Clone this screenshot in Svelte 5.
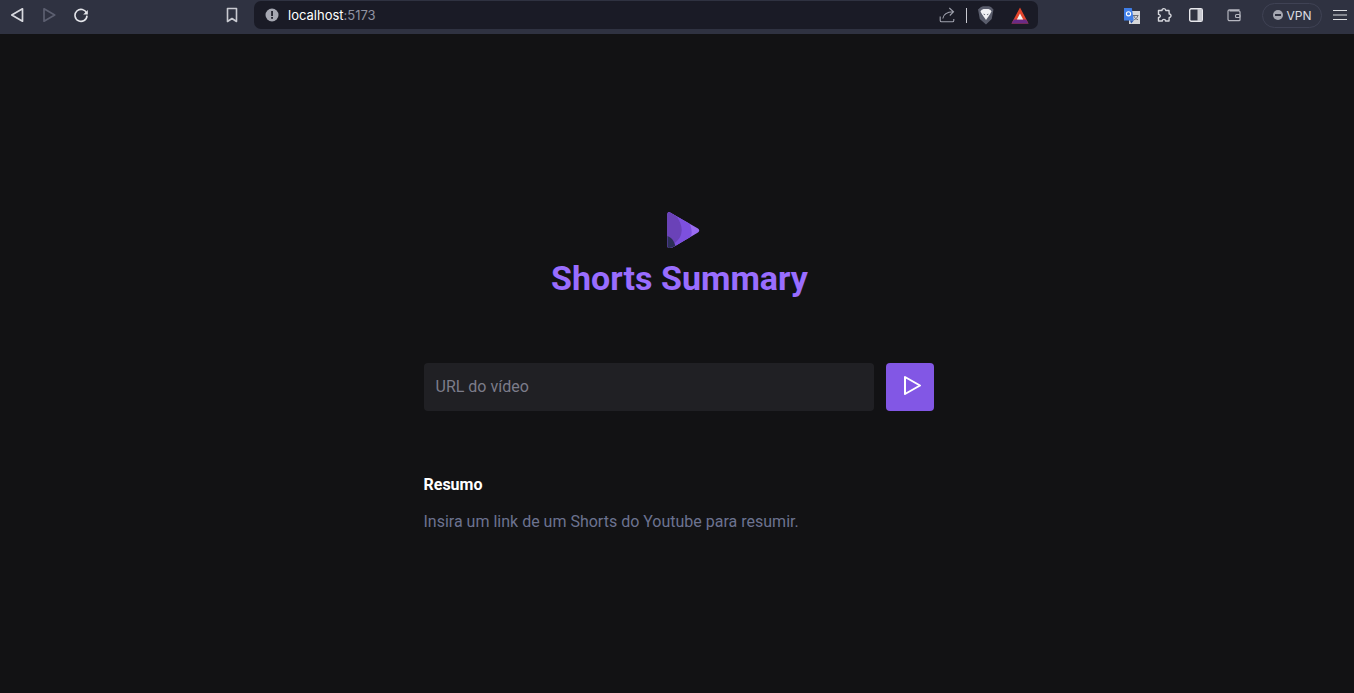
<script>
  let url = $state('');
</script>

<div class="page">
  <header class="toolbar">
    <nav class="nav">
      <button class="tb" aria-label="Voltar"><svg width="16" height="16" viewBox="0 0 16 16"><path d="M13.500 1.800 2.800 8 13.500 14.200Z" fill="none" stroke="#d8d9df" stroke-width="1.700" stroke-linejoin="round"/></svg></button>
      <button class="tb" aria-label="Avançar"><svg width="16" height="16" viewBox="0 0 16 16"><path d="M3 1.800 13.700 8 3 14.200Z" fill="none" stroke="#5c5f70" stroke-width="1.700" stroke-linejoin="round"/></svg></button>
      <button class="tb" aria-label="Recarregar"><svg width="16" height="16" viewBox="0 0 16 16"><path d="M13.600 6.200A6 6 0 1 0 14 8.600" fill="none" stroke="#e4e5ea" stroke-width="1.600"/><path d="M14.800 3v4.600h-4.600Z" fill="#e4e5ea"/></svg></button>
    </nav>
    <button class="tb bookmark" aria-label="Favorito"><svg width="14" height="16" viewBox="0 0 14 16"><path d="M2.500 1.500h9v13L7 11.500l-4.500 3Z" fill="none" stroke="#c9cad1" stroke-width="1.600" stroke-linejoin="round"/></svg></button>
    <div class="address">
      <svg class="info" width="14" height="14" viewBox="0 0 14 14"><circle cx="7" cy="7" r="6.500" fill="#a6a8b2"/><rect x="6.200" y="3" width="1.700" height="5" fill="#1a1b26"/><rect x="6.200" y="9" width="1.700" height="1.800" fill="#1a1b26"/></svg>
      <span class="host">localhost<span class="port">:5173</span></span>
      <span class="spacer"></span>
      <svg class="share" width="16" height="16" viewBox="0 0 16 16"><path d="M1.200 9.500v4a1.300 1.300 0 0 0 1.300 1.300h11a1.300 1.300 0 0 0 1.300-1.300v-1.500" fill="none" stroke="#a0a2ae" stroke-width="1.100"/><path d="M3.800 11.500C4.500 7.500 7.500 5 14 4.800M10.300 1 14.500 4.800 10.800 8.500" fill="none" stroke="#a0a2ae" stroke-width="1.100"/></svg>
      <span class="divider"></span>
      <svg class="brave" width="18" height="19" viewBox="0 0 18 19"><path d="M4 1 6 .3h6l2 .7 2.500 2.500-.5 2.500-1.300 7L9 18.500 2.800 13l-1.300-7L1 3.500Z" fill="#5a5d6c"/><path d="M4.500 4 6.500 3h5l2 1 1 1.500-1.700 3-1 1.500L9 14 6.200 10l-1-1.500L3.500 5.500Z" fill="#f1f1f4"/><path d="M6.500 7.500 8.300 8.500 7 9.300ZM11.500 7.500 9.700 8.500 11 9.300Z" fill="#5a5d6c"/></svg>
      <svg class="bat" width="18" height="17" viewBox="0 0 18 17"><path d="M9 .5.500 16.500h17Z" fill="#e4452b"/><path d="M.5 16.500h17l-2.400-4H2.900Z" fill="#6a2a86"/><path d="M9 6.500 5.800 12.500h6.400Z" fill="#f4f4f4"/></svg>
    </div>
    <div class="ext">
      <svg class="translate" width="16" height="16" viewBox="0 0 16 16"><rect x="5" y="3" width="11" height="13" fill="#d6d7da"/><path d="M9 7.500h5.500M9.800 8c.7 1.800 2.300 3.200 4.200 3.700M13.700 8c-.5 1.700-1.800 3-3.500 3.700" fill="none" stroke="#6c6e76" stroke-width="1"/><path d="M0 0h7.800l2 12.500H0Z" fill="#3f7ee8"/><path d="M6 12.500h3.800L7.200 15.500Z" fill="#2a56b0"/><circle cx="4.500" cy="5.800" r="2.100" fill="none" stroke="#fff" stroke-width="1.100"/></svg>
      <svg class="puzzle" width="16" height="16" viewBox="0 0 16 16"><path d="M6 3.500C5.700 1.200 9.600.8 9.800 3.500H13l.2 3.500c2.300-.3 2.500 3.500 0 3.500l-.2 3.500H9.500c.2-2.200-3.400-2.200-3.200 0H2.500v-3.600c2.300.3 2.500-3.100 0-3V3.500Z" fill="none" stroke="#d6d7dd" stroke-width="1.400" stroke-linejoin="round"/></svg>
      <svg class="panel" width="14" height="14" viewBox="0 0 14 14"><rect x=".7" y=".7" width="12.600" height="12.600" rx="1.500" fill="none" stroke="#e8e8ec" stroke-width="1.400"/><rect x="8.500" y="1" width="4.500" height="12" fill="#c9cad1"/></svg>
      <svg class="wallet" width="14" height="14" viewBox="0 0 14 14"><path d="M12 3V1.800H2.500A1.500 1.500 0 0 0 1 3.300v7.900a1.500 1.500 0 0 0 1.500 1.500h9.500a1 1 0 0 0 1-1V4a1 1 0 0 0-1-1H2.500" fill="none" stroke="#b6b7c0" stroke-width="1.200"/><rect x="8.500" y="6.500" width="4.500" height="3" rx="1" fill="none" stroke="#b6b7c0" stroke-width="1.100"/></svg>
      <div class="vpn"><span class="dot"></span>VPN</div>
      <svg class="menu" width="14" height="12" viewBox="0 0 14 12"><path d="M0 1.500h14M0 6h14M0 10.500h14" stroke="#dcdde2" stroke-width="1.200"/></svg>
    </div>
  </header>

  <main class="main">
    <div class="container">
      <div class="brand">
        <svg class="logo" width="33" height="38" viewBox="0 0 33 38">
          <defs><clipPath id="tri"><path d="M.5 3Q.5.400 3 1.500L31 17.500Q33.500 19.500 31 21.500L9 34.500Q5 37 2 37Q.5 37 .5 35Z"/></clipPath></defs>
          <g clip-path="url(#tri)">
            <rect width="33" height="38" fill="#9a6cf2"/>
            <path d="M0 0H10C20 6 25 14 24.700 22 24 28 20 30 14 36L0 38Z" fill="#7d50de"/>
            <path d="M0 0H4C10 4 14.500 12 14.700 19 14.500 25 12 28 9 31L0 38Z" fill="#6a42b8"/>
            <path d="M0 25C4 26 8 30 9 38H0Z" fill="#2b2f56"/>
          </g>
        </svg>
        <h1>Shorts Summary</h1>
      </div>

      <form class="search" onsubmit={(e) => e.preventDefault()}>
        <input type="url" placeholder="URL do vídeo" bind:value={url} />
        <button class="submit" type="submit" aria-label="Resumir">
          <svg width="24" height="24" viewBox="0 0 24 24"><path d="M5 3 20 11.500 5 20Z" fill="none" stroke="#fff" stroke-width="2" stroke-linejoin="round"/></svg>
        </button>
      </form>

      <section class="summary">
        <h2>Resumo</h2>
        <p>Insira um link de um Shorts do Youtube para resumir.</p>
      </section>
    </div>
  </main>
</div>

<style>
  :global(body) {
    margin: 0;
    background: #121214;
  }
  .page {
    height: 693px;
    display: flex;
    flex-direction: column;
    font-family: Roboto, "Liberation Sans", sans-serif;
    overflow: hidden;
  }
  .toolbar {
    height: 34px;
    flex: none;
    background: #2f3241;
    display: flex;
    align-items: flex-start;
    box-sizing: border-box;
  }
  .nav {
    display: flex;
    margin-left: 1px;
    width: 215px;
    flex: none;
  }
  .tb {
    background: none;
    border: none;
    padding: 0;
    width: 32px;
    height: 30px;
    display: flex;
    align-items: center;
    justify-content: center;
  }
  .bookmark {
    margin-right: 6px;
    flex: none;
  }
  .address {
    width: 784px;
    height: 28px;
    margin-top: 1px;
    flex: none;
    background: #1a1b26;
    border-radius: 7px;
    display: flex;
    align-items: center;
    box-sizing: border-box;
    padding-left: 11px;
    padding-right: 9px;
  }
  .info { flex: none; margin-right: 9px; }
  .host {
    color: #fff;
    font-size: 13px;
    font-family: Inter, Roboto, sans-serif;
  }
  .port { color: #9092a0; }
  .spacer { flex: 1; }
  .share { margin-right: 11px; }
  .divider {
    width: 1px;
    height: 15px;
    background: #c9cad1;
    margin-right: 10px;
  }
  .brave { margin-right: 16px; }
  .bat { margin-top: 1px; }
  .ext {
    display: flex;
    align-items: center;
    height: 30px;
    margin-left: 86px;
    flex: none;
  }
  .translate { margin-right: 16px; margin-top: 1px; }
  .puzzle { margin-right: 17px; }
  .panel { margin-right: 24px; }
  .wallet { margin-right: 21px; }
  .vpn {
    width: 60px;
    height: 25px;
    box-sizing: border-box;
    border: 1px solid #3f4254;
    border-radius: 13px;
    display: flex;
    align-items: center;
    justify-content: center;
    gap: 4px;
    color: #dcdde2;
    font-size: 12px;
    margin-right: 11px;
    font-family: Inter, Roboto, sans-serif;
  }
  .dot {
    width: 10px;
    height: 10px;
    border-radius: 50%;
    background: #a6a8b2;
    display: flex;
    align-items: center;
    justify-content: center;
  }
  .dot::after {
    content: "";
    width: 6px;
    height: 2px;
    background: #2f3241;
  }
  .main {
    flex: 1;
    display: flex;
    justify-content: center;
  }
  .container {
    width: 510px;
    margin-left: 3px;
    display: flex;
    flex-direction: column;
    padding-top: 177px;
  }
  .brand {
    display: flex;
    flex-direction: column;
    align-items: center;
  }
  .logo { display: block; margin-left: 9px; }
  h1 {
    margin: 5px 0 0 2px;
    font-size: 34px;
    line-height: 48px;
    font-weight: 700;
    color: #996dff;
  }
  .search {
    display: flex;
    gap: 12px;
    margin-top: 61px;
  }
  input {
    flex: 1;
    min-width: 0;
    height: 48px;
    box-sizing: border-box;
    background: #202024;
    border: none;
    border-radius: 4px;
    padding: 0 12px 2px;
    color: #fff;
    font: 400 16px Roboto, sans-serif;
    outline: none;
  }
  input::placeholder { color: #7c7c8a; opacity: 1; }
  .submit {
    width: 48px;
    height: 48px;
    flex: none;
    background: #8257e5;
    border: none;
    border-radius: 4px;
    display: flex;
    align-items: center;
    justify-content: center;
    padding: 0 0 2px 4px;
  }
  .summary { margin-top: 62px; }
  h2 {
    margin: 0;
    font-size: 16px;
    line-height: 24px;
    font-weight: 700;
    color: #fff;
  }
  p {
    margin: 13px 0 0;
    font-size: 16px;
    line-height: 24px;
    color: #6c7290;
  }
</style>
